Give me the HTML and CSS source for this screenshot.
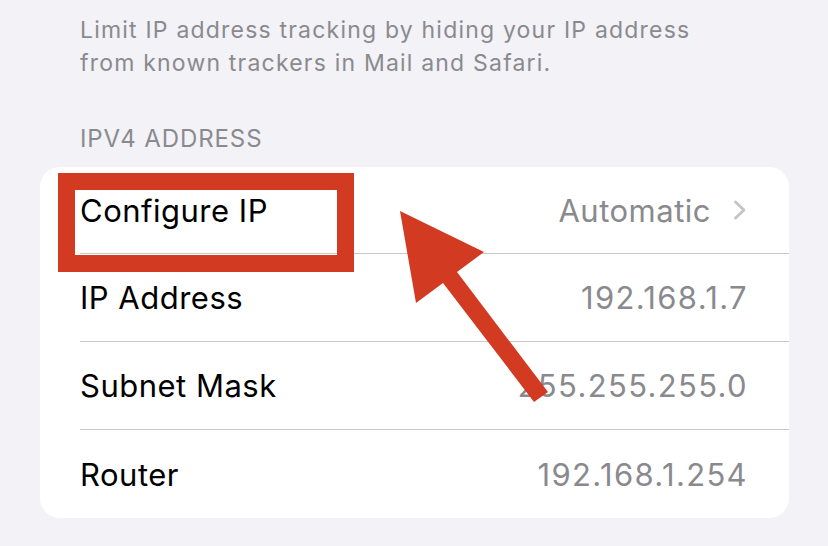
FILE: index.html
```html
<!DOCTYPE html>
<html lang="en">
<head>
  <meta charset="utf-8">
  <title>IPv4 Address</title>
  <link rel="stylesheet" href="styles.css">
</head>
<body>

  <p class="group-footer">Limit IP address tracking by hiding your IP address from known trackers in Mail and Safari.</p>

  <h3 class="group-header">IPv4 Address</h3>

  <div class="group">
    <div class="row">
      <span class="row-label">Configure IP</span>
      <span class="row-value">Automatic
        <svg class="chevron" viewBox="0 0 14 20" width="14" height="20">
          <path d="M2.5 2 L11 10 L2.5 18" fill="none" stroke="#c4c4c7" stroke-width="2.8" stroke-linecap="round" stroke-linejoin="round"/>
        </svg>
      </span>
    </div>
    <div class="row">
      <span class="row-label">IP Address</span>
      <span class="row-value num">192.168.1.7</span>
    </div>
    <div class="row">
      <span class="row-label">Subnet Mask</span>
      <span class="row-value num">255.255.255.0</span>
    </div>
    <div class="row">
      <span class="row-label">Router</span>
      <span class="row-value num">192.168.1.254</span>
    </div>
  </div>

  <!-- annotation -->
  <div class="mark-box"></div>
  <svg class="mark-arrow" width="828" height="546" viewBox="0 0 828 546">
    <polygon points="400,211 484,252 457,272 548,392 534,402 443,283 416,303" fill="#d33a22"/>
  </svg>

</body>
</html>
```

FILE: styles.css
```css
body {
  margin: 0;
  background-color: #f2f2f7;
  font-family: Inter, "Noto Sans", sans-serif;
  position: relative;
  height: 546px;
  overflow: hidden;
}
.group-footer {
  margin: 0;
  padding: 14px 90px 0 80px;
  font-size: 23px;
  letter-spacing: 1.2px;
  line-height: 33px;
  color: #8a8a8e;
}
.group-header {
  margin: 42px 0 0;
  padding-left: 80px;
  font-size: 24px;
  letter-spacing: 0.9px;
  line-height: 33px;
  font-weight: normal;
  text-transform: uppercase;
  color: #8a8a8e;
}
.group {
  margin: 12px 39px 0 40px;
  background-color: #fff;
  border-radius: 20px;
  overflow: hidden;
}
.row {
  display: flex;
  align-items: center;
  justify-content: space-between;
  height: 88px;
  margin-left: 40px;
  padding-right: 42px;
  border-bottom: 1px solid #c8c8cb;
  box-sizing: border-box;
  font-size: 31px;
  letter-spacing: 0.5px;
}
.row:first-child {
  height: 87px;
}
.row:last-child {
  border-bottom: none;
}
.row-label {
  color: #000;
}
.row-value {
  display: flex;
  align-items: center;
  gap: 22px;
  color: #8a8a8e;
}
.row-value.num {
  letter-spacing: 1.35px;
  margin-right: -1px;
}
.chevron {
  display: block;
}
.mark-box {
  position: absolute;
  left: 58px;
  top: 173px;
  width: 296px;
  height: 99px;
  border: 17px solid #d33a22;
  box-sizing: border-box;
}
.mark-arrow {
  position: absolute;
  left: 0;
  top: 0;
}
```
